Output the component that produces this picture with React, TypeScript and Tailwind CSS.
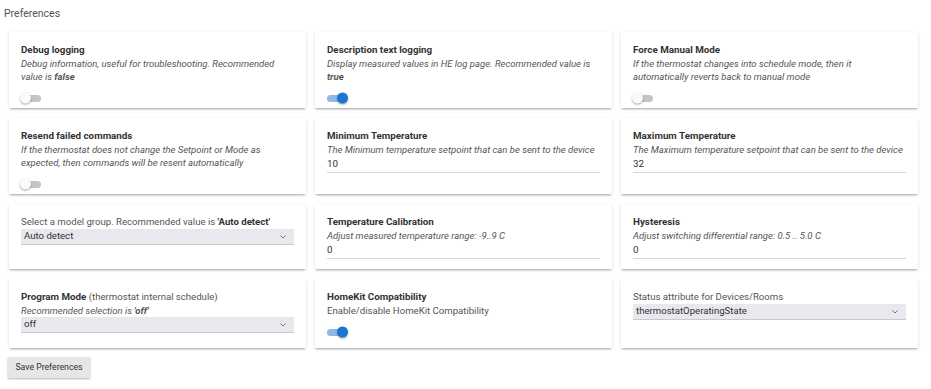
import React from 'react';

type Pref =
  | { kind: 'toggle'; title: React.ReactNode; desc: React.ReactNode; on: boolean; plainDesc?: boolean }
  | { kind: 'input'; title: string; desc: string; value: string }
  | { kind: 'select'; label: React.ReactNode; desc?: React.ReactNode; value: string };

// line breaks follow the reference wrapping
const PREFS: Pref[] = [
  {
    kind: 'toggle',
    title: 'Debug logging',
    desc: <>Debug information, useful for troubleshooting. Recommended<br />value is <b>false</b></>,
    on: false,
  },
  {
    kind: 'toggle',
    title: 'Description text logging',
    desc: <>Display measured values in HE log page. Recommended value is<br /><b>true</b></>,
    on: true,
  },
  {
    kind: 'toggle',
    title: 'Force Manual Mode',
    desc: <>If the thermostat changes into schedule mode, then it<br />automatically reverts back to manual mode</>,
    on: false,
  },
  {
    kind: 'toggle',
    title: 'Resend failed commands',
    desc: <>If the thermostat does not change the Setpoint or Mode as<br />expected, then commands will be resent automatically</>,
    on: false,
  },
  { kind: 'input', title: 'Minimum Temperature', desc: 'The Minimum temperature setpoint that can be sent to the device', value: '10' },
  { kind: 'input', title: 'Maximum Temperature', desc: 'The Maximum temperature setpoint that can be sent to the device', value: '32' },
  { kind: 'select', label: <>Select a model group. Recommended value is <b className="text-[#333]">'Auto detect'</b></>, value: 'Auto detect' },
  { kind: 'input', title: 'Temperature Calibration', desc: 'Adjust measured temperature range: -9..9 C', value: '0' },
  { kind: 'input', title: 'Hysteresis', desc: 'Adjust switching differential range: 0.5 .. 5.0 C', value: '0' },
  {
    kind: 'select',
    label: <><b className="text-[#333] text-[9.8px]">Program Mode</b> (thermostat internal schedule)</>,
    desc: <>Recommended selection is <b>'off'</b></>,
    value: 'off',
  },
  { kind: 'toggle', title: 'HomeKit Compatibility', desc: 'Enable/disable HomeKit Compatibility', on: true, plainDesc: true },
  { kind: 'select', label: 'Status attribute for Devices/Rooms', value: 'thermostatOperatingState' },
];

function Toggle({ on }: { on: boolean }) {
  return (
    <div className="mt-[5px] h-[20px] flex items-center">
      <div className={`relative w-[20px] h-[7px] rounded-full ${on ? 'bg-[#8fb8e6]' : 'bg-[#c4c4c4]'}`}>
        <span
          className={`absolute top-1/2 -translate-y-1/2 w-[11px] h-[11px] rounded-full shadow-[0_1px_2px_rgba(0,0,0,0.35)] ${
            on ? 'right-[-1px] bg-[#1976d2]' : 'left-[-1px] bg-[#fafafa]'
          }`}
        />
      </div>
    </div>
  );
}

function Select({ value }: { value: string }) {
  return (
    <div className="mb-[15px] h-[16px] flex items-center justify-between bg-[#e8e8ee] border-b border-[#c9c9cf] pl-[3px] pr-[8px] text-[9.6px] text-[#333]">
      <span>{value}</span>
      <svg width="6" height="4" viewBox="0 0 6 4" fill="none" stroke="#777" strokeWidth="1">
        <path d="M0.5 0.5 3 3 5.5 0.5" />
      </svg>
    </div>
  );
}

function Card({ pref }: { pref: Pref }) {
  return (
    <div className="bg-white pt-[11px] px-3 shadow-[0_2px_2px_-1px_rgba(0,0,0,0.28),0_1px_3px_rgba(0,0,0,0.12)]">
      {pref.kind === 'select' ? (
        <>
          <div className="h-[14px] text-[9.6px] leading-[14px] text-[#555] whitespace-nowrap">{pref.label}</div>
          {pref.desc && <div className="h-[13px] text-[9.5px] leading-[13px] italic text-[#555]">{pref.desc}</div>}
          <Select value={pref.value} />
        </>
      ) : (
        <>
          <div className="text-[9.8px] leading-[14px] font-bold text-[#333]">{pref.title}</div>
          <div
            className={`leading-[13px] text-[#555] whitespace-nowrap ${
              pref.kind === 'toggle' && pref.plainDesc ? 'text-[9.6px]' : 'text-[9.5px] italic'
            }`}
          >
            {pref.desc}
          </div>
          {pref.kind === 'toggle' ? (
            <Toggle on={pref.on} />
          ) : (
            <div className="mb-[10px] h-[17px] flex items-center border-b border-[#d6d6d6] text-[9.8px] text-[#333]">{pref.value}</div>
          )}
        </>
      )}
    </div>
  );
}

export default function App() {
  return (
    <div className="w-[931px] h-[389px] bg-white font-['Roboto',sans-serif] overflow-hidden">
      <div className="pl-[4px] pt-[7px] h-[32px] text-[10.5px] leading-[14px] text-[#555]">Preferences</div>
      <div className="grid grid-cols-3 gap-x-[9px] gap-y-[10px] pl-[9px] pr-[13px]">
        {PREFS.map((p, i) => (
          <Card key={i} pref={p} />
        ))}
      </div>
      <button className="ml-[8px] mt-[9px] w-[82px] h-[21px] bg-[#e6e6e6] text-[8.7px] text-[#333] shadow-[0_1px_2px_rgba(0,0,0,0.3)]">
        Save Preferences
      </button>
    </div>
  );
}
